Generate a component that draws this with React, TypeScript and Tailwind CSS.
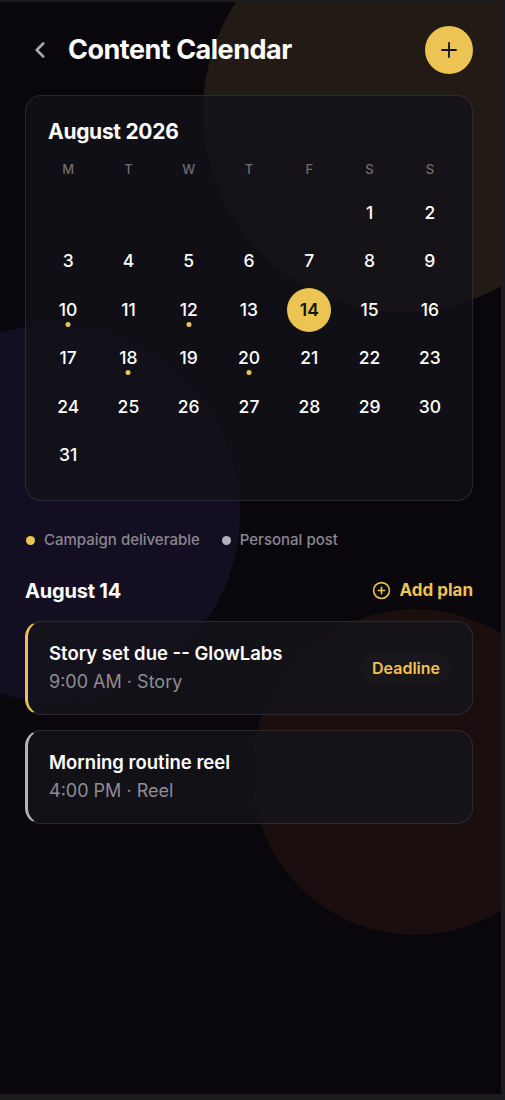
import { ChevronLeft, Plus, CirclePlus } from "lucide-react";

const weekDays = ["M", "T", "W", "T", "F", "S", "S"];

// August 2026 starts on a Saturday
const cells: (number | null)[] = [
  ...Array(5).fill(null),
  ...Array.from({ length: 31 }, (_, i) => i + 1),
];

const marked = [10, 12, 18, 20];
const selected = 14;

const events = [
  {
    title: "Story set due -- GlowLabs",
    meta: "9:00 AM · Story",
    tag: "Deadline",
    accent: "border-l-[#e9c250]",
  },
  {
    title: "Morning routine reel",
    meta: "4:00 PM · Reel",
    tag: null,
    accent: "border-l-[#b7b2bf]",
  },
];

export default function App() {
  return (
    <div className="w-[505px] h-[1100px] bg-[#1c1c1e] pt-[2px] font-['Inter',sans-serif]">
      <div className="relative w-[501px] h-[1092px] bg-[#09070c] overflow-hidden">
        {/* background blobs */}
        <div className="absolute left-[203px] top-[-90px] w-[400px] h-[400px] rounded-full bg-[#221b15]" />
        <div className="absolute left-[-136px] top-[323px] w-[376px] h-[376px] rounded-full bg-[#130e21]" />
        <div className="absolute left-[252px] top-[607px] w-[326px] h-[326px] rounded-full bg-[#1a0f0e]" />

        <div className="relative pl-[25px] pr-[28px] pt-[24px]">
          <header className="flex items-center justify-between h-[48px]">
            <div className="flex items-center">
              <ChevronLeft className="w-[26px] h-[26px] text-[#a9a6ad] ml-[2px]" strokeWidth={2.4} />
              <h1 className="ml-[15px] text-[27px] font-bold tracking-[-0.5px] text-white">
                Content Calendar
              </h1>
            </div>
            <button className="w-[48px] h-[48px] rounded-full bg-[#ecc453] flex items-center justify-center">
              <Plus className="w-[24px] h-[24px] text-[#111]" strokeWidth={1.8} />
            </button>
          </header>

          <section className="mt-[21px] rounded-[16px] border border-white/10 bg-[#131118]/80 px-[12px] pt-[22px] pb-[21px]">
            <h2 className="pl-[10px] text-[21px] leading-[28px] font-bold text-white tracking-[-0.3px]">
              August 2026
            </h2>
            <div className="mt-[14px] grid grid-cols-7">
              {weekDays.map((d, i) => (
                <div key={i} className="text-center text-[13px] leading-[18px] font-medium text-[#6f6c75]">
                  {d}
                </div>
              ))}
            </div>
            <div className="mt-[11px] grid grid-cols-7 auto-rows-[48.4px]">
              {cells.map((n, i) => (
                <div key={i} className="relative flex items-center justify-center">
                  {n !== null && (
                    <>
                      <div
                        className={
                          n === selected
                            ? "w-[44px] h-[44px] rounded-full bg-[#ecc453] flex items-center justify-center text-[17.5px] font-semibold text-[#16130c]"
                            : "w-[44px] h-[44px] flex items-center justify-center text-[17.5px] font-medium text-white"
                        }
                      >
                        {n}
                      </div>
                      {marked.includes(n) && (
                        <span className="absolute left-1/2 top-[36px] -translate-x-1/2 w-[5px] h-[5px] rounded-full bg-[#ecc453]" />
                      )}
                    </>
                  )}
                </div>
              ))}
            </div>
          </section>

          <div className="mt-[28px] flex items-center text-[15px] font-medium text-[#8a8790]">
            <span className="w-[9px] h-[9px] rounded-full bg-[#ecc453] ml-[1px]" />
            <span className="ml-[9px]">Campaign deliverable</span>
            <span className="w-[9px] h-[9px] rounded-full bg-[#b3afb9] ml-[22px]" />
            <span className="ml-[9px]">Personal post</span>
          </div>

          <div className="mt-[25px] flex items-center justify-between">
            <h3 className="text-[20px] leading-[28px] font-bold text-white tracking-[-0.2px]">August 14</h3>
            <button className="flex items-center gap-[8px] text-[17px] font-bold text-[#ecc453]">
              <CirclePlus className="w-[19px] h-[19px]" strokeWidth={2} />
              Add plan
            </button>
          </div>

          <div className="mt-[16px] flex flex-col gap-[15px]">
            {events.map((e) => (
              <div
                key={e.title}
                className={`flex items-center justify-between rounded-[16px] border border-white/10 border-l-[3px] ${e.accent} bg-[#15131a]/90 pl-[21px] pr-[20px] h-[94px]`}
              >
                <div>
                  <p className="text-[18.5px] leading-[24px] font-semibold text-white">{e.title}</p>
                  <p className="mt-[5px] text-[18px] leading-[24px] text-[#8f8c94]">{e.meta}</p>
                </div>
                {e.tag && (
                  <span className="rounded-full bg-white/[0.015] px-[12px] py-[5px] text-[16px] font-semibold text-[#ecc453]">
                    {e.tag}
                  </span>
                )}
              </div>
            ))}
          </div>
        </div>
      </div>
    </div>
  );
}
